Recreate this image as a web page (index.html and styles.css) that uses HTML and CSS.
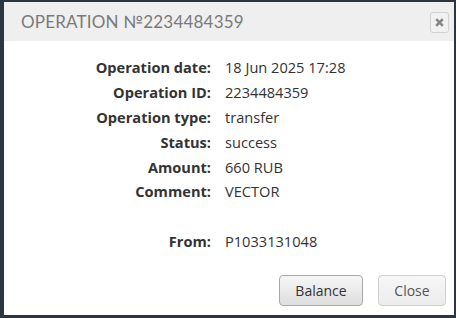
FILE: index.html
```html
<!DOCTYPE html>
<html lang="en">
<head>
    <meta charset="UTF-8">
    <meta name="viewport" content="width=device-width, initial-scale=1.0">
    <title>Operation</title>
    <link rel="stylesheet" href="styles.css">
</head>
<body>
    <div class="modal">
        <div class="modal-header">
            <h1>Operation №2234484359</h1>
            <button class="close-x" title="Close">
                <svg width="9" height="9" viewBox="0 0 9 9"><path d="M1.2 1.2L7.8 7.8M7.8 1.2L1.2 7.8" stroke="#858585" stroke-width="2.6"/></svg>
            </button>
        </div>

        <div class="modal-body">
            <div class="row"><span class="label">Operation date:</span><span class="value">18 Jun 2025 17:28</span></div>
            <div class="row"><span class="label">Operation ID:</span><span class="value">2234484359</span></div>
            <div class="row"><span class="label">Operation type:</span><span class="value">transfer</span></div>
            <div class="row"><span class="label">Status:</span><span class="value">success</span></div>
            <div class="row"><span class="label">Amount:</span><span class="value">660 RUB</span></div>
            <div class="row"><span class="label">Comment:</span><span class="value">VECTOR</span></div>
            <div class="row empty"></div>
            <div class="row"><span class="label">From:</span><span class="value">P1033131048</span></div>
        </div>

        <div class="modal-footer">
            <button class="btn">Balance</button>
            <button class="btn btn-light">Close</button>
        </div>
    </div>
</body>
</html>
```

FILE: styles.css
```css
html, body {
    height: 100%;
}
body {
    margin: 0;
    background: #2b3640;
    padding: 2px 2px 3px 4px;
    box-sizing: border-box;
}
.modal {
    background: #fff;
    height: 100%;
    display: flex;
    flex-direction: column;
}
.modal-header {
    background: #efefef;
    height: 39px;
    display: flex;
    align-items: center;
    justify-content: space-between;
    padding: 0 5px 0 17px;
}
.modal-header h1 {
    margin: 0;
    font-family: 'Lato', sans-serif;
    font-size: 17px;
    font-weight: 400;
    letter-spacing: 0.2px;
    text-transform: uppercase;
    color: #7a7a7a;
}
.close-x {
    width: 19px;
    height: 21px;
    padding: 0;
    border: 1px solid #d2d2d2;
    border-radius: 3px;
    background: #f1f1f1;
    display: flex;
    align-items: center;
    justify-content: center;
    margin-top: 2px;
}
.modal-body {
    flex: 1;
    padding-top: 14px;
    font-family: 'Open Sans', sans-serif;
    font-size: 14.6px;
    color: #333;
}
.row {
    display: flex;
    height: 24.8px;
    align-items: center;
}
.label {
    width: 207px;
    text-align: right;
    font-weight: 700;
}
.value {
    padding-left: 14px;
}
.modal-footer {
    display: flex;
    justify-content: flex-end;
    gap: 15px;
    padding: 0 8px 9px 0;
}
.btn {
    font-family: 'Open Sans', sans-serif;
    font-size: 14px;
    color: #333;
    height: 31px;
    width: 84px;
    border: 1px solid #a9a9a9;
    border-radius: 4px;
    background: linear-gradient(#f6f6f6, #dedede);
}
.btn-light {
    width: 68px;
    color: #555;
    border-color: #d0d0d0;
    background: linear-gradient(#f7f7f7, #ececec);
}
```
